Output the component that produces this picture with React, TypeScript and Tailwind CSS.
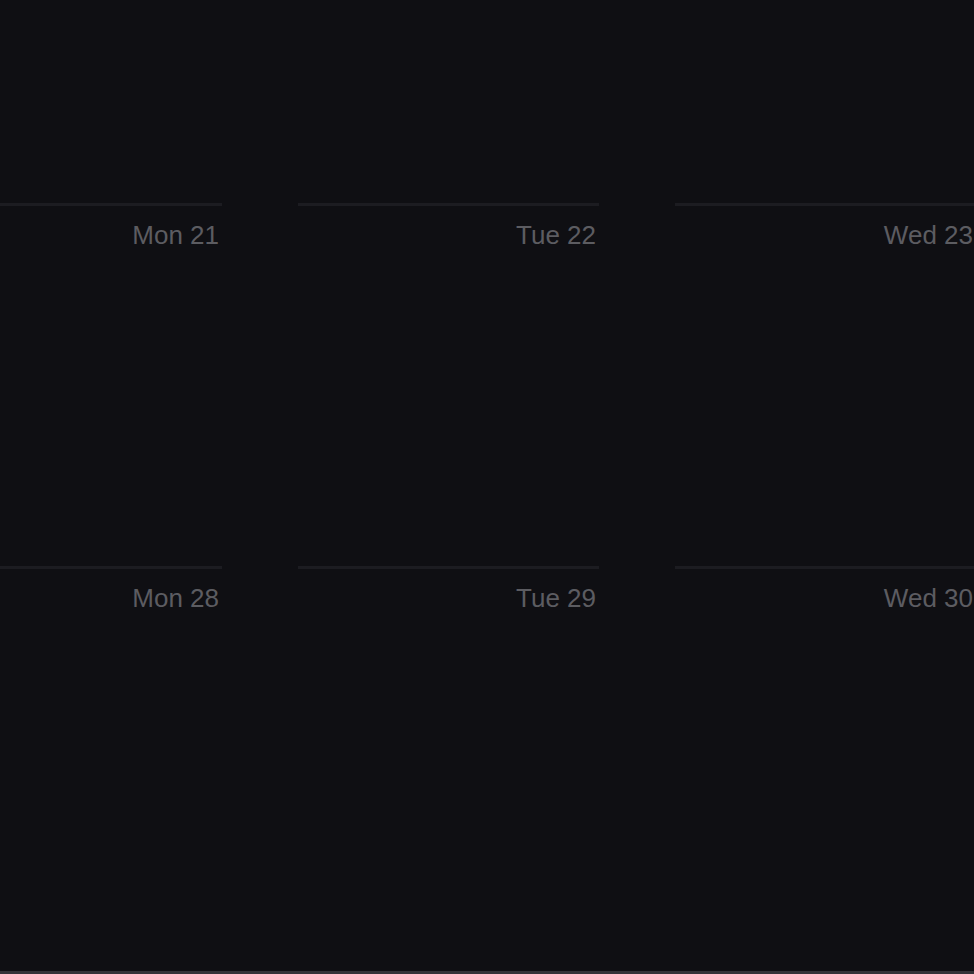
import React from 'react';

const weeks = [
  ['Mon 21', 'Tue 22', 'Wed 23'],
  ['Mon 28', 'Tue 29', 'Wed 30'],
];

const App: React.FC = () => {
  return (
    <div className="h-[974px] w-full bg-[#0f0f13] flex flex-col overflow-hidden font-['Liberation_Sans',Arial,sans-serif]">
      <div className="flex-1 overflow-hidden pt-[203px]">
        <div className="ml-[-79px] flex flex-col">
          {weeks.map((week, wi) => (
            <div key={wi} className="flex gap-[76px] h-[363px] shrink-0">
              {week.map((day) => (
                <div key={day} className="w-[301px] shrink-0 border-t-[3px] border-[#1c1c21] pt-[14px] pr-[3px] text-right">
                  <span className="text-[26px] leading-[30px] text-[#5c5c61]">{day}</span>
                </div>
              ))}
            </div>
          ))}
        </div>
      </div>
      <div className="h-[3px] bg-[#333338] shrink-0" />
    </div>
  );
};

export default App;
